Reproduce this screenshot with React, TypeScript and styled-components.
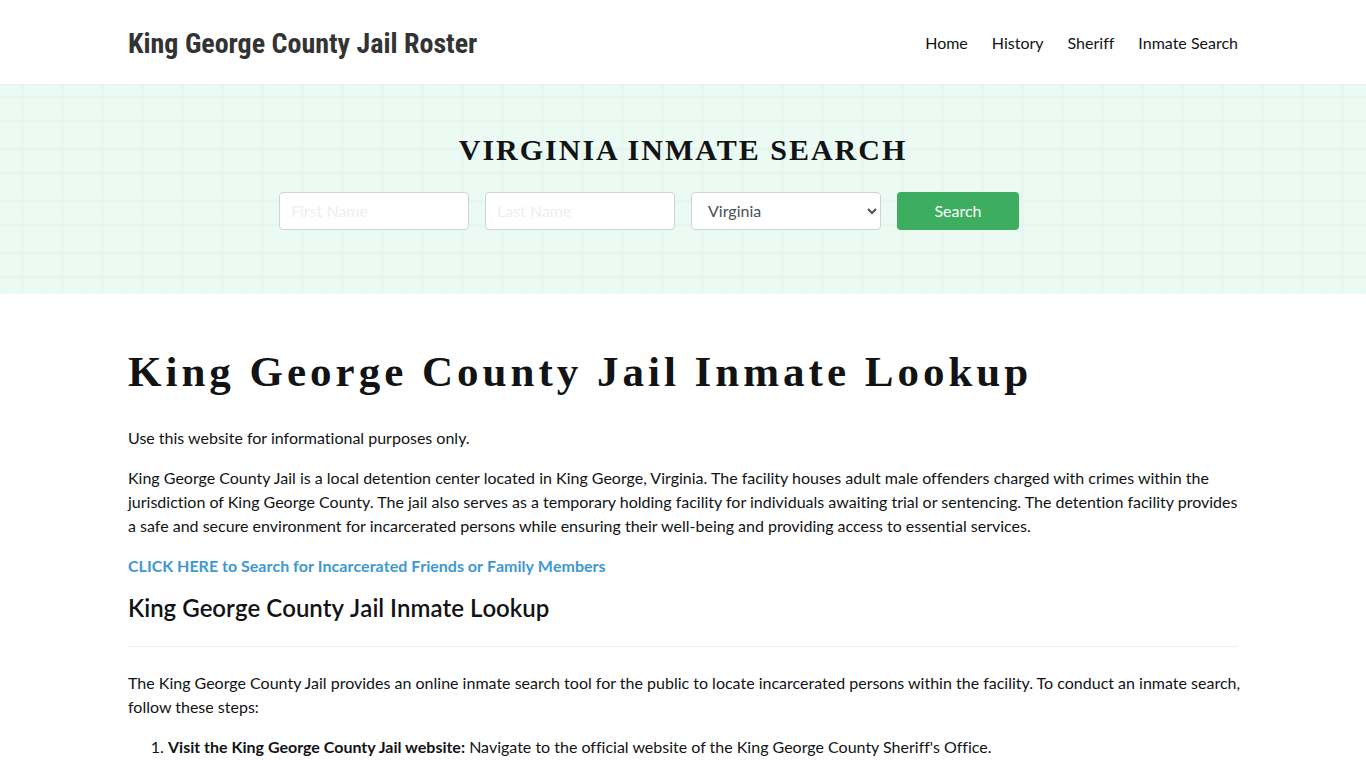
import React from "react";
import styled, { createGlobalStyle } from "styled-components";

const Global = createGlobalStyle`
  *, *::before, *::after { box-sizing: border-box; }
  body {
    margin: 0;
    background: #fff;
    color: #111315;
    font: 16px/24px Lato, "Liberation Sans", sans-serif;
    font-variant-ligatures: none;
  }
`;

const Container = styled.div`
  max-width: 1140px;
  margin: 0 auto;
  padding: 0 15px;
`;

const Header = styled.header`
  border-bottom: 1px solid #efefef;
`;

const HeaderRow = styled(Container)`
  display: flex;
  align-items: center;
  justify-content: space-between;
  padding-top: 21px;
  padding-bottom: 19px;
`;

const Brand = styled.a`
  padding-top: 2px;
  color: #333;
  font: 700 28px/42px "Liberation Sans Narrow", "Roboto Condensed", "Liberation Sans", sans-serif;
  text-decoration: none;
`;

const Nav = styled.nav`
  display: flex;
  gap: 24px;
`;

const NavLink = styled.a`
  color: #111315;
  text-decoration: none;
`;

const Hero = styled.section`
  padding: 43px 0 64px;
  background-color: #ebfaf3;
  background-image:
    repeating-linear-gradient(to right, transparent 0 20px, #e7f5ef 23px, transparent 25px 40px),
    repeating-linear-gradient(to right, transparent 0 1px, #e9f8f1 1px 2px, transparent 2px 40px),
    repeating-linear-gradient(to bottom, transparent 0 10px, #e6f4ee 12px, transparent 14px 34px, #e6f4ee 36px, transparent 38px 52px);
`;

const HeroTitle = styled.h2`
  margin: 0 0 21px;
  text-align: center;
  text-transform: uppercase;
  font: 700 30px/43px "Liberation Serif", serif;
  letter-spacing: 2px;
`;

const SearchForm = styled.form`
  display: flex;
  gap: 16px;
  max-width: 808px;
  margin: 0 auto;
`;

const field = `
  width: 190px;
  height: 38px;
  border: 1px solid #ced4da;
  border-radius: 4px;
  background: #fff;
  color: #495057;
  font: 16px/24px Lato, sans-serif;
`;

const TextField = styled.input`
  ${field}
  padding: 5px 12px 7px 11px;
  &::placeholder { color: #eceff2; opacity: 1; }
`;

const StateSelect = styled.select`
  ${field}
  padding: 5px 12px 7px;
`;

const SearchButton = styled.button`
  width: 122px;
  height: 38px;
  border: 0;
  border-radius: 4px;
  background: #3dae60;
  color: #fff;
  font: 16px/24px Lato, sans-serif;
`;

const Main = styled(Container).attrs({ as: "main" })`
  padding-top: 48px;
`;

const Title = styled.h1`
  margin: 0 0 24px;
  font: 700 43px/60px "Liberation Serif", serif;
  letter-spacing: 4px;
`;

const Text = styled.p`
  margin: 0 -8px 16px 0;
`;

const TextLink = styled.a`
  color: #3d98d3;
  font-weight: 700;
  font-kerning: none;
  text-decoration: none;
`;

const SectionTitle = styled.h2`
  margin: 0 0 24px;
  padding-bottom: 24px;
  border-bottom: 1px solid #eee;
  font-size: 24px;
  line-height: 28px;
  font-weight: 600;
  font-kerning: none;
`;

const Steps = styled.ol`
  margin: 0 0 16px;
  padding-left: 40px;
`;

export default function App() {
  return (
    <>
      <Global />
      <Header>
        <HeaderRow>
          <Brand href="#">King George County Jail Roster</Brand>
          <Nav>
            <NavLink href="#">Home</NavLink>
            <NavLink href="#">History</NavLink>
            <NavLink href="#">Sheriff</NavLink>
            <NavLink href="#">Inmate Search</NavLink>
          </Nav>
        </HeaderRow>
      </Header>
      <Hero>
        <HeroTitle>Virginia Inmate Search</HeroTitle>
        <SearchForm>
          <TextField aria-label="First Name" placeholder="First Name" />
          <TextField aria-label="Last Name" placeholder="Last Name" />
          <StateSelect aria-label="State">
            <option>Virginia</option>
          </StateSelect>
          <SearchButton type="button">Search</SearchButton>
        </SearchForm>
      </Hero>
      <Main>
        <Title>King George County Jail Inmate Lookup</Title>
        <Text>Use this website for informational purposes only.</Text>
        <Text>
          King George County Jail is a local detention center located in King George, Virginia. The
          facility houses adult male offenders charged with crimes within the jurisdiction of King
          George County. The jail also serves as a temporary holding facility for individuals
          awaiting trial or sentencing. The detention facility provides a safe and secure
          environment for incarcerated persons while ensuring their well-being and providing access
          to essential services.
        </Text>
        <Text>
          <TextLink href="#">CLICK HERE to Search for Incarcerated Friends or Family Members</TextLink>
        </Text>
        <SectionTitle>King George County Jail Inmate Lookup</SectionTitle>
        <Text>
          The King George County Jail provides an online inmate search tool for the public to locate
          incarcerated persons within the facility. To conduct an inmate search, follow these steps:
        </Text>
        <Steps>
          <li>
            <strong>Visit the King George County Jail website:</strong> Navigate to the official
            website of the King George County Sheriff's Office.
          </li>
        </Steps>
      </Main>
    </>
  );
}
